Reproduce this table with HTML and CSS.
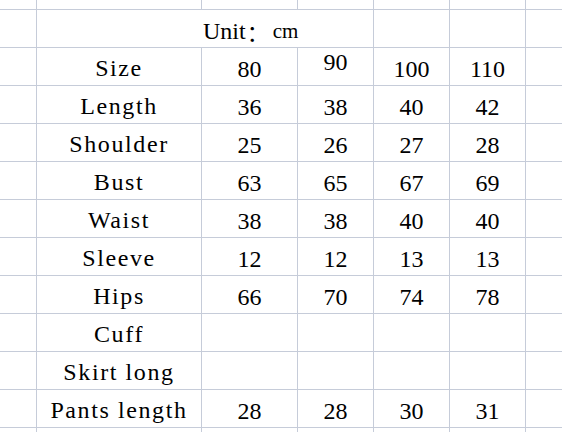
FILE: index.html
```html
<!DOCTYPE html>
<html lang="en">
<head>
<meta charset="utf-8">
<title>Size chart</title>
<link rel="stylesheet" href="styles.css">
</head>
<body>
<div class="sheet">
  <div class="c"></div><div class="c"></div><div class="c"></div><div class="c"></div><div class="c"></div><div class="c"></div><div class="c"></div>

  <div class="c"></div>
  <div class="c unit-cell"><span class="unit-lbl">Unit</span><span class="unit-colon">：</span><span class="unit-cm">cm</span></div>
  <div class="c"></div><div class="c"></div><div class="c"></div>

  <div class="c"></div><div class="c"><span class="lbl">Size</span></div><div class="c">80</div><div class="c raised">90</div><div class="c">100</div><div class="c">110</div><div class="c"></div>
  <div class="c"></div><div class="c"><span class="lbl">Length</span></div><div class="c">36</div><div class="c">38</div><div class="c">40</div><div class="c">42</div><div class="c"></div>
  <div class="c"></div><div class="c"><span class="lbl">Shoulder</span></div><div class="c">25</div><div class="c">26</div><div class="c">27</div><div class="c">28</div><div class="c"></div>
  <div class="c"></div><div class="c"><span class="lbl">Bust</span></div><div class="c">63</div><div class="c">65</div><div class="c">67</div><div class="c">69</div><div class="c"></div>
  <div class="c"></div><div class="c"><span class="lbl">Waist</span></div><div class="c">38</div><div class="c">38</div><div class="c">40</div><div class="c">40</div><div class="c"></div>
  <div class="c"></div><div class="c"><span class="lbl">Sleeve</span></div><div class="c">12</div><div class="c">12</div><div class="c">13</div><div class="c">13</div><div class="c"></div>
  <div class="c"></div><div class="c"><span class="lbl">Hips</span></div><div class="c">66</div><div class="c">70</div><div class="c">74</div><div class="c">78</div><div class="c"></div>
  <div class="c"></div><div class="c"><span class="lbl">Cuff</span></div><div class="c"></div><div class="c"></div><div class="c"></div><div class="c"></div><div class="c"></div>
  <div class="c"></div><div class="c"><span class="lbl">Skirt long</span></div><div class="c"></div><div class="c"></div><div class="c"></div><div class="c"></div><div class="c"></div>
  <div class="c"></div><div class="c"><span class="lbl">Pants length</span></div><div class="c">28</div><div class="c">28</div><div class="c">30</div><div class="c">31</div><div class="c"></div>

  <div class="c"></div><div class="c"></div><div class="c"></div><div class="c"></div><div class="c"></div><div class="c"></div><div class="c"></div>
</div>
</body>
</html>
```

FILE: styles.css
```css
html, body {
  margin: 0;
  padding: 0;
  background: #ffffff;
}
body {
  width: 562px;
  height: 432px;
  overflow: hidden;
}
.sheet {
  display: grid;
  grid-template-columns: 36px 164px 95px 75px 75px 75px 1fr;
  grid-template-rows: 9px repeat(11, 37px) 4px;
  gap: 1px;
  background: #c6ccd9;
  width: 562px;
}
.c {
  background: #ffffff;
  display: flex;
  justify-content: center;
  align-items: flex-start;
  padding-top: 5px;
  line-height: 32px;
  font-family: "Liberation Serif", "Times New Roman", serif;
  font-size: 24px;
  color: #000000;
  white-space: nowrap;
  overflow: visible;
  min-width: 0;
  min-height: 0;
}
.sheet > .c:nth-child(-n+7),
.sheet > .c:nth-last-child(-n+7) {
  padding-top: 0;
}
.raised {
  padding-top: 0;
  line-height: 29px;
}
.lbl {
  display: inline-block;
  font-family: "Liberation Serif", "Times New Roman", serif;
  font-size: 24px;
  letter-spacing: 1.6px;
  white-space: pre;
  margin-top: -1px;
}
.unit-cell {
  grid-column: span 3;
  justify-content: flex-start;
  padding-left: 166px;
}
.unit-lbl {
  font-family: "Liberation Serif", "Times New Roman", serif;
  font-size: 24px;
  letter-spacing: 0;
}
.unit-colon {
  font-family: "Noto Sans CJK SC", sans-serif;
  font-size: 22px;
  margin-left: 1px;
}
.unit-cm {
  margin-left: 4px;
  font-family: "Liberation Serif", "Times New Roman", serif;
  font-size: 21px;
}
```
